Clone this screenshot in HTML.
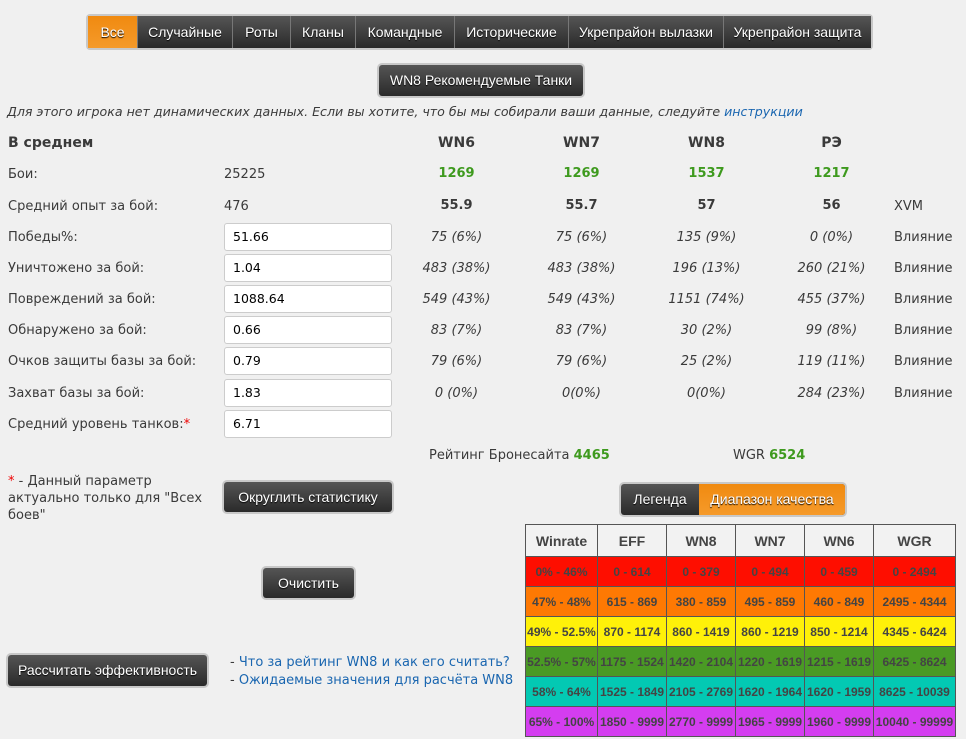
<!DOCTYPE html>
<html><head><meta charset="utf-8"><style>
body{margin:0;width:966px;height:739px;background:#f0f0f0;font-family:"DejaVu Sans","Liberation Sans",sans-serif;font-size:13px;color:#3a3a3a;position:relative;overflow:hidden}
.a{position:absolute;white-space:nowrap}
.btn{position:absolute;background:linear-gradient(#555,#2a2a2a);color:#fff;font-family:"Liberation Sans",sans-serif;font-size:14px;text-align:center;border-radius:3px;box-shadow:0 0 0 2px #c8c8c8;box-sizing:border-box;text-shadow:0 1px 1px #000}
.tabs{position:absolute;left:88px;top:16px;height:32px;display:flex;box-shadow:0 0 0 2px #c8c8c8;border-radius:2px}
.tabs div{background:linear-gradient(#555,#2a2a2a);color:#fff;font-family:"Liberation Sans",sans-serif;font-size:14px;line-height:32px;text-align:center;border-left:1px solid #777;box-sizing:border-box;text-shadow:0 1px 1px #000}
.tabs div.on{background:linear-gradient(#f08a10,#f59a2a);border-left:none}
.c{position:absolute;width:125px;text-align:center;font-style:italic}
.h{position:absolute;width:125px;text-align:center;font-weight:bold;font-size:14px}
.g{color:#3e9a1e}
.in{position:absolute;left:224px;width:168px;height:28px;background:#fff;border:1px solid #ccc;border-radius:3px;box-sizing:border-box;padding-left:8px;line-height:26px;color:#000;font-size:12.5px}
table{position:absolute;left:525px;top:524px;border-collapse:collapse;font-family:"Liberation Sans",sans-serif;font-weight:bold;font-size:12px;color:#444}
td{border:1px solid #555;height:29px;padding:0;text-align:center}
th{border:1px solid #555;height:29px;background:#f2f2f2;font-size:14px;color:#444}
a{color:#1a66b0;text-decoration:none}
</style></head><body>
<div class="tabs">
<div class="on" style="width:49px">Все</div><div style="width:95px">Случайные</div><div style="width:58px">Роты</div><div style="width:65px">Кланы</div><div style="width:99px">Командные</div><div style="width:114px">Исторические</div><div style="width:155px">Укрепрайон вылазки</div><div style="width:148px">Укрепрайон защита</div>
</div>
<div class="btn" style="left:379px;top:65px;width:204px;height:31px;line-height:31px">WN8 Рекомендуемые Танки</div>
<div class="a" style="left:7px;top:104px;font-style:italic;font-size:12.6px">Для этого игрока нет динамических данных. Если вы хотите, что бы мы собирали ваши данные, следуйте <a>инструкции</a></div>

<div class="a" style="left:8px;top:135px;font-weight:bold;font-size:14px">В среднем</div>
<div class="h" style="left:394px;top:135px">WN6</div><div class="h" style="left:519px;top:135px">WN7</div><div class="h" style="left:644px;top:135px">WN8</div><div class="h" style="left:769px;top:135px">РЭ</div>

<div class="a" style="left:8px;top:167px">Бои:</div><div class="a" style="left:224px;top:167px">25225</div>
<div class="h g" style="left:394px;top:166px;font-size:13px">1269</div><div class="h g" style="left:519px;top:166px;font-size:13px">1269</div><div class="h g" style="left:644px;top:166px;font-size:13px">1537</div><div class="h g" style="left:769px;top:166px;font-size:13px">1217</div>

<div class="a" style="left:8px;top:199px">Средний опыт за бой:</div><div class="a" style="left:224px;top:199px">476</div>
<div class="h" style="left:394px;top:198px;font-size:13px">55.9</div><div class="h" style="left:519px;top:198px;font-size:13px">55.7</div><div class="h" style="left:644px;top:198px;font-size:13px">57</div><div class="h" style="left:769px;top:198px;font-size:13px">56</div><div class="a" style="left:894px;top:199px">XVM</div>

<div class="a" style="left:8px;top:230px">Победы%:</div><div class="in" style="top:223px">51.66</div>
<div class="c" style="left:394px;top:230px">75 (6%)</div><div class="c" style="left:519px;top:230px">75 (6%)</div><div class="c" style="left:644px;top:230px">135 (9%)</div><div class="c" style="left:769px;top:230px">0 (0%)</div><div class="a" style="left:894px;top:230px">Влияние</div>

<div class="a" style="left:8px;top:261px">Уничтожено за бой:</div><div class="in" style="top:254px">1.04</div>
<div class="c" style="left:394px;top:261px">483 (38%)</div><div class="c" style="left:519px;top:261px">483 (38%)</div><div class="c" style="left:644px;top:261px">196 (13%)</div><div class="c" style="left:769px;top:261px">260 (21%)</div><div class="a" style="left:894px;top:261px">Влияние</div>

<div class="a" style="left:8px;top:292px">Повреждений за бой:</div><div class="in" style="top:285px">1088.64</div>
<div class="c" style="left:394px;top:292px">549 (43%)</div><div class="c" style="left:519px;top:292px">549 (43%)</div><div class="c" style="left:644px;top:292px">1151 (74%)</div><div class="c" style="left:769px;top:292px">455 (37%)</div><div class="a" style="left:894px;top:292px">Влияние</div>

<div class="a" style="left:8px;top:323px">Обнаружено за бой:</div><div class="in" style="top:316px">0.66</div>
<div class="c" style="left:394px;top:323px">83 (7%)</div><div class="c" style="left:519px;top:323px">83 (7%)</div><div class="c" style="left:644px;top:323px">30 (2%)</div><div class="c" style="left:769px;top:323px">99 (8%)</div><div class="a" style="left:894px;top:323px">Влияние</div>

<div class="a" style="left:8px;top:354px">Очков защиты базы за бой:</div><div class="in" style="top:347px">0.79</div>
<div class="c" style="left:394px;top:354px">79 (6%)</div><div class="c" style="left:519px;top:354px">79 (6%)</div><div class="c" style="left:644px;top:354px">25 (2%)</div><div class="c" style="left:769px;top:354px">119 (11%)</div><div class="a" style="left:894px;top:354px">Влияние</div>

<div class="a" style="left:8px;top:386px">Захват базы за бой:</div><div class="in" style="top:379px">1.83</div>
<div class="c" style="left:394px;top:386px">0 (0%)</div><div class="c" style="left:519px;top:386px">0(0%)</div><div class="c" style="left:644px;top:386px">0(0%)</div><div class="c" style="left:769px;top:386px">284 (23%)</div><div class="a" style="left:894px;top:386px">Влияние</div>

<div class="a" style="left:8px;top:417px">Средний уровень танков:<span style="color:#e00">*</span></div><div class="in" style="top:410px">6.71</div>

<div class="a" style="left:429px;top:448px">Рейтинг Бронесайта <b class="g">4465</b></div>
<div class="a" style="left:733px;top:448px">WGR <b class="g">6524</b></div>

<div class="a" style="left:8px;top:473px;white-space:normal;width:200px;line-height:17px"><span style="color:#e00">*</span> - Данный параметр актуально только для "Всех боев"</div>
<div class="btn" style="left:224px;top:482px;width:168px;height:30px;line-height:30px">Округлить статистику</div>
<div class="btn" style="left:263px;top:568px;width:91px;height:30px;line-height:30px">Очистить</div>
<div class="btn" style="left:8px;top:655px;width:199px;height:31px;line-height:31px">Рассчитать эффективность</div>
<div class="a" style="left:230px;top:654px;line-height:18px">- <a>Что за рейтинг WN8 и как его считать?</a><br>- <a>Ожидаемые значения для расчёта WN8</a></div>

<div class="btn" style="left:621px;top:484px;width:224px;height:31px;display:flex;overflow:hidden;line-height:31px"><div style="width:78px">Легенда</div><div style="flex:1;background:linear-gradient(#f08a10,#f59a2a)">Диапазон качества</div></div>

<table>
<tr><th style="width:69px">Winrate</th><th style="width:66px">EFF</th><th style="width:66px">WN8</th><th style="width:66px">WN7</th><th style="width:66px">WN6</th><th style="width:79px">WGR</th></tr>
<tr style="background:#fe0e00"><td>0% - 46%</td><td>0 - 614</td><td>0 - 379</td><td>0 - 494</td><td>0 - 459</td><td>0 - 2494</td></tr>
<tr style="background:#fe7903"><td>47% - 48%</td><td>615 - 869</td><td>380 - 859</td><td>495 - 859</td><td>460 - 849</td><td>2495 - 4344</td></tr>
<tr style="background:#fff109"><td>49% - 52.5%</td><td>870 - 1174</td><td>860 - 1419</td><td>860 - 1219</td><td>850 - 1214</td><td>4345 - 6424</td></tr>
<tr style="background:#4a9a24"><td>52.5% - 57%</td><td>1175 - 1524</td><td>1420 - 2104</td><td>1220 - 1619</td><td>1215 - 1619</td><td>6425 - 8624</td></tr>
<tr style="background:#03c9b3"><td>58% - 64%</td><td>1525 - 1849</td><td>2105 - 2769</td><td>1620 - 1964</td><td>1620 - 1959</td><td>8625 - 10039</td></tr>
<tr style="background:#d43df0"><td>65% - 100%</td><td>1850 - 9999</td><td>2770 - 9999</td><td>1965 - 9999</td><td>1960 - 9999</td><td>10040 - 99999</td></tr>
</table>
</body></html>
